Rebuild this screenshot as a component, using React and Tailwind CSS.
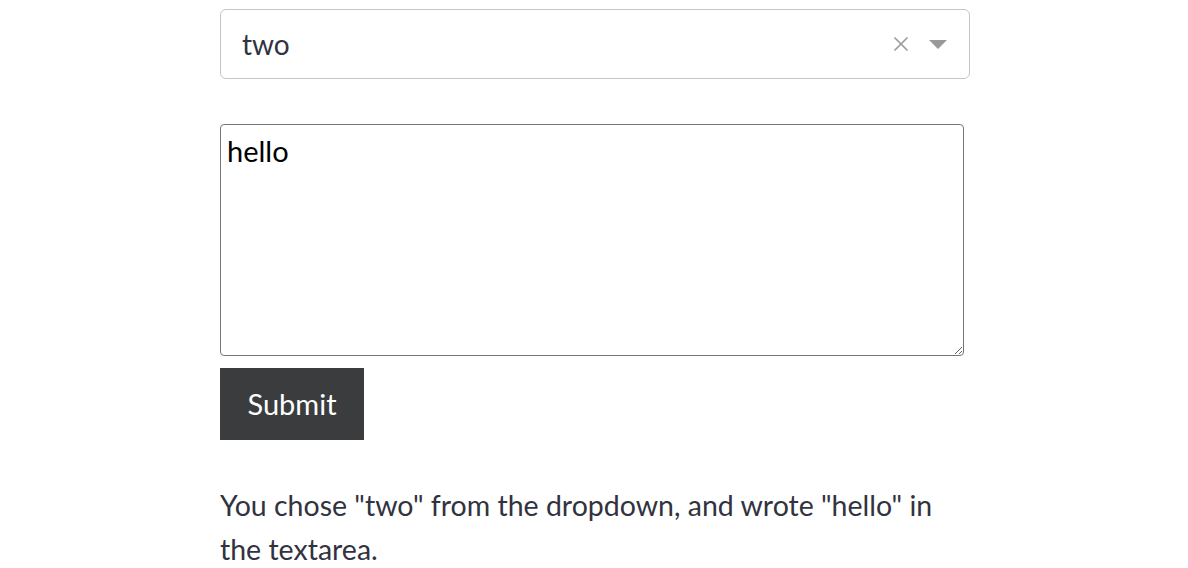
import { useState } from 'react';

export default function App() {
  const [choice, setChoice] = useState('two');
  const [text, setText] = useState('hello');

  return (
    <div className="min-h-screen bg-white font-['Lato',_'Noto_Sans',_sans-serif]">
      <div className="w-[752px] mx-auto pt-[9px] pl-[2px]">
        <div className="h-[70px] border border-[#c4c4c4] rounded-[6px] flex items-center pl-[21px] pr-[22px]">
          <span className="flex-1 text-[28px] text-[#31333f]">{choice}</span>
          <button onClick={() => setChoice('')} className="text-[#999999] mr-[20px]">
            <svg width="16" height="16" viewBox="0 0 16 16" fill="none" stroke="currentColor" strokeWidth="1.6">
              <path d="M1.5 1.5l13 13M14.5 1.5l-13 13" />
            </svg>
          </button>
          <svg width="18" height="9" viewBox="0 0 18 9" className="text-[#999999]">
            <path d="M0 0h18L9 9z" fill="currentColor" />
          </svg>
        </div>

        <textarea
          value={text}
          onChange={e => setText(e.target.value)}
          className="block mt-[45px] w-[744px] h-[232px] border border-[#767676] rounded-[4px] px-[6px] pt-[8px] text-[29px] leading-[36px] text-black outline-none"
        />

        <button className="mt-[12px] w-[144px] h-[72px] bg-[#3b3c3e] text-white text-[29px]">Submit</button>

        <p className="mt-[43px] text-[28.5px] leading-[44px] text-[#31333f] w-[725px]">
          {`You chose "${choice}" from the dropdown, and wrote "${text}" in the textarea.`}
        </p>
      </div>
    </div>
  );
}
